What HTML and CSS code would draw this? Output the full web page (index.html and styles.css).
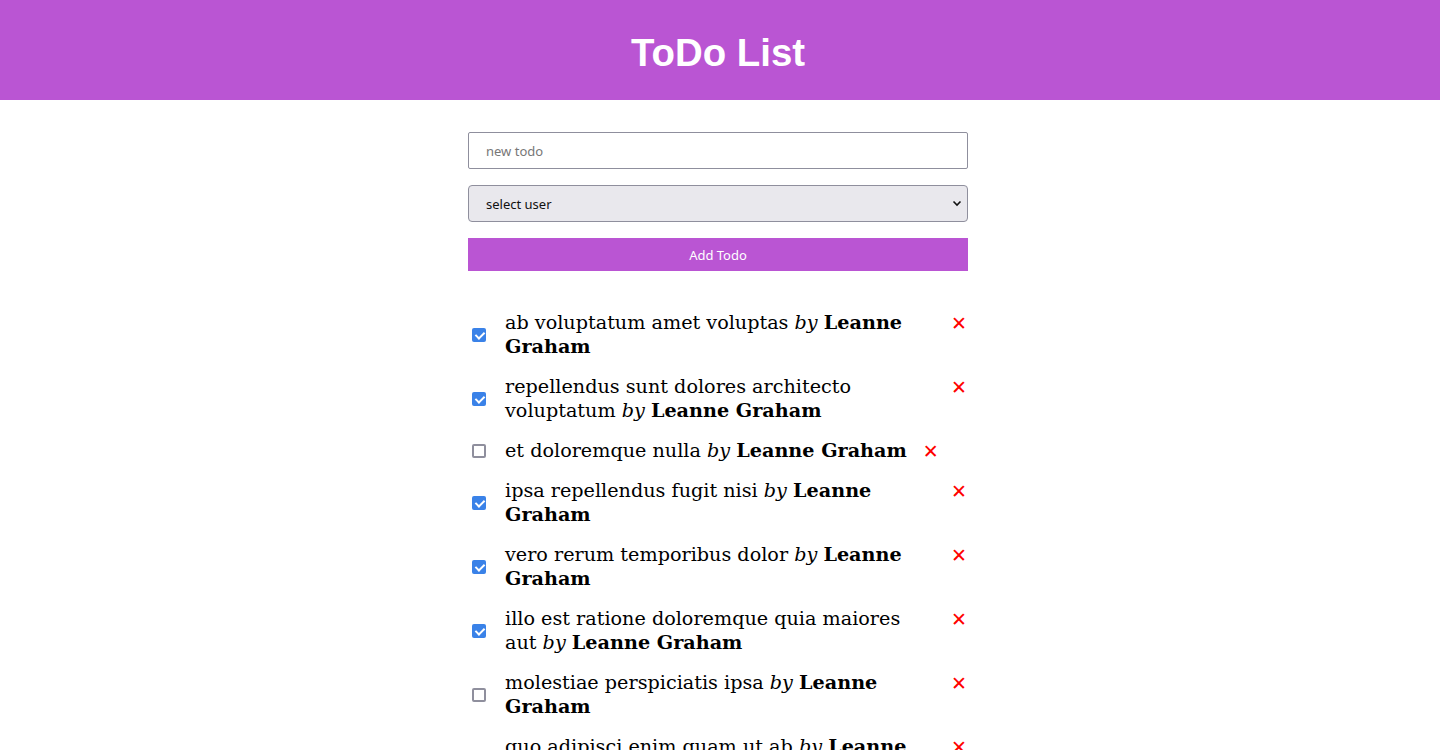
FILE: index.html
```html
<!DOCTYPE html>
<html lang="en">
<head>
<meta charset="utf-8">
<title>ToDo List</title>
<link rel="stylesheet" href="styles.css">
</head>
<body>
<header class="header"><h1 class="title">ToDo List</h1></header>
<main class="app">
  <form class="form">
    <input class="field" type="text" placeholder="new todo">
    <div class="select-wrap">
      <select class="field select"><option>select user</option></select>
      <svg class="chev" width="10" height="7" viewBox="0 0 10 7"><path d="M1.5 1.5 L5 5 L8.5 1.5" fill="none" stroke="#111" stroke-width="1.6"/></svg>
    </div>
    <button class="add" type="button">Add Todo</button>
  </form>
  <ul class="list">
    <li class="item"><span class="cb checked"></span><span class="text">ab voluptatum amet voluptas <i>by</i> <b>Leanne Graham</b></span><span class="del">✕</span></li>
    <li class="item"><span class="cb checked"></span><span class="text">repellendus sunt dolores architecto voluptatum <i>by</i> <b>Leanne Graham</b></span><span class="del">✕</span></li>
    <li class="item"><span class="cb"></span><span class="text">et doloremque nulla <i>by</i> <b>Leanne Graham</b></span><span class="del">✕</span></li>
    <li class="item"><span class="cb checked"></span><span class="text">ipsa repellendus fugit nisi <i>by</i> <b>Leanne Graham</b></span><span class="del">✕</span></li>
    <li class="item"><span class="cb checked"></span><span class="text">vero rerum temporibus dolor <i>by</i> <b>Leanne Graham</b></span><span class="del">✕</span></li>
    <li class="item"><span class="cb checked"></span><span class="text">illo est ratione doloremque quia maiores aut <i>by</i> <b>Leanne Graham</b></span><span class="del">✕</span></li>
    <li class="item"><span class="cb"></span><span class="text">molestiae perspiciatis ipsa <i>by</i> <b>Leanne Graham</b></span><span class="del">✕</span></li>
    <li class="item"><span class="cb"></span><span class="text">quo adipisci enim quam ut ab <i>by</i> <b>Leanne Graham</b></span><span class="del">✕</span></li>
  </ul>
</main>
</body>
</html>
```
FILE: styles.css
```css
* { box-sizing: border-box; }
html, body { margin: 0; padding: 0; background: #fff; }
body { font-family: "DejaVu Serif", serif; overflow: hidden; }
.header {
  background: #ba55d3;
  height: 100px;
  display: flex;
  align-items: center;
  justify-content: center;
  padding: 6px 4px 0 0;
}
.title {
  margin: 0;
  color: #fff;
  font-family: "Liberation Sans", Arial, sans-serif;
  font-weight: 700;
  font-size: 38.4px;
  line-height: 44px;
}
.app {
  display: flex;
  flex-direction: column;
  align-items: center;
  padding-right: 4px;
  padding-top: 32px;
}
.form {
  width: 500px;
  display: flex;
  flex-direction: column;
  gap: 16px;
}
.field {
  width: 100%;
  height: 37px;
  border: 1px solid #8f8f9d;
  border-radius: 2px;
  padding: 0 17px;
  font-family: "Noto Sans", sans-serif;
  font-size: 13px;
  color: #111;
  background: #fff;
  outline: none;
}
.field::placeholder { color: #777; }
.select-wrap { position: relative; }
.select {
  -webkit-appearance: none;
  appearance: none;
  background: #e9e8ed;
  border-radius: 4px;
  display: block;
}
.chev { position: absolute; right: 6px; top: 15px; pointer-events: none; }
.add {
  height: 33px;
  border: none;
  background: #ba55d3;
  color: #fff;
  font-family: "Noto Sans", sans-serif;
  font-size: 13px;
  padding: 0;
}
.list {
  list-style: none;
  margin: 40px 0 0;
  padding: 0;
  width: 500px;
  display: flex;
  flex-direction: column;
  gap: 16px;
}
.item {
  display: flex;
  align-items: center;
  font-size: 19.2px;
  line-height: 24px;
  color: #000;
}
.cb {
  flex: none;
  width: 14px;
  height: 14px;
  margin: 0 19px 0 4px;
  border: 2px solid #8f8f9d;
  border-radius: 2px;
  background: #fff;
  position: relative;
}
.cb.checked {
  border: none;
  background: #3a82e8;
}
.cb.checked::after {
  content: "";
  position: absolute;
  left: 4.5px;
  top: 2px;
  width: 4px;
  height: 7px;
  border: solid #fff;
  border-width: 0 2px 2px 0;
  transform: rotate(45deg);
}
.text { flex: 0 1 auto; min-width: 0; }
.text b { font-weight: 700; }
.del {
  flex: none;
  align-self: flex-start;
  margin-left: 16px;
  width: 17px;
  color: #f00;
  font-family: "DejaVu Sans", sans-serif;
  font-weight: 700;
  font-size: 19px;
  line-height: 24px;
}
```
